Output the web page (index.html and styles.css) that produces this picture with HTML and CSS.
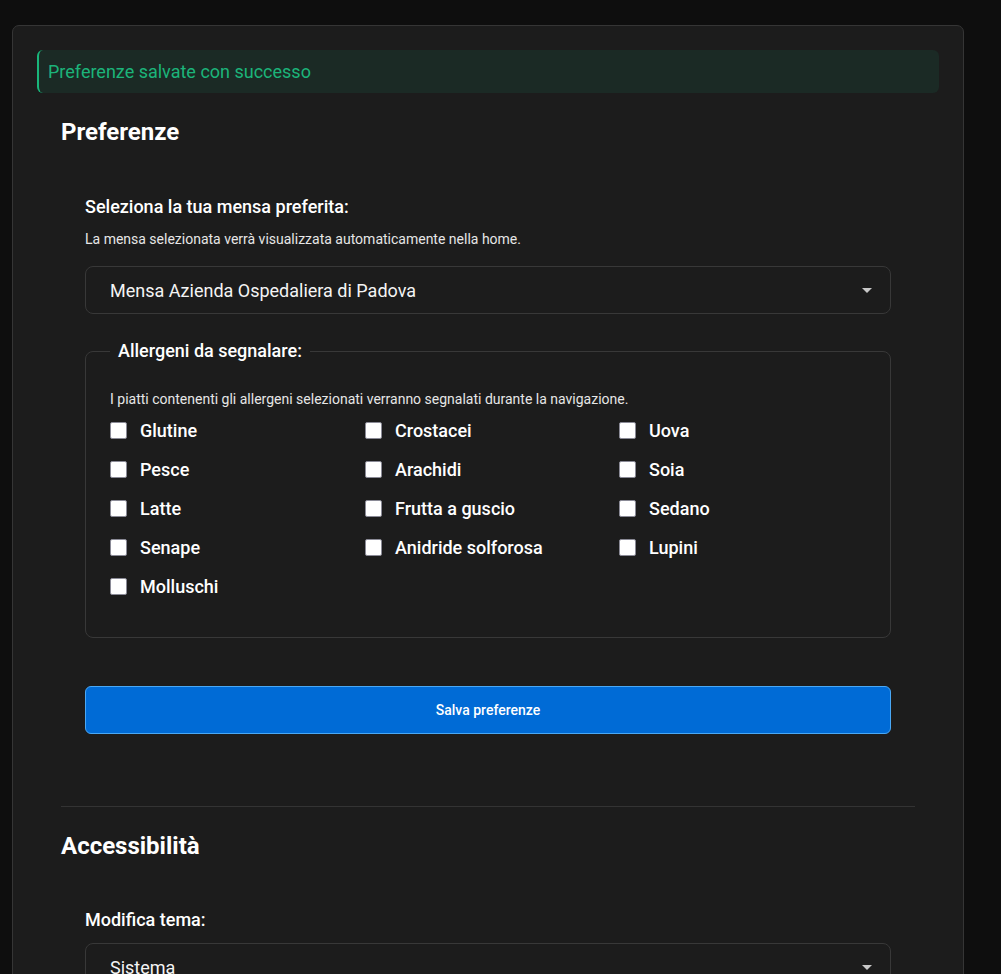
FILE: index.html
```html
<!DOCTYPE html>
<html lang="it">
<head>
<meta charset="utf-8">
<title>Preferenze</title>
<link rel="stylesheet" href="styles.css">
</head>
<body>
<main class="card">
  <div class="alert">Preferenze salvate con successo</div>

  <section class="section">
    <h2 class="title">Preferenze</h2>
    <form class="group">
      <label class="label" for="mensa">Seleziona la tua mensa preferita:</label>
      <p class="desc">La mensa selezionata verrà visualizzata automaticamente nella home.</p>
      <div class="select-wrap">
        <select id="mensa" class="select">
          <option>Mensa Azienda Ospedaliera di Padova</option>
        </select>
        <svg class="arrow" width="10" height="5" viewBox="0 0 10 5"><path d="M0 0h10L5 5z" fill="#c8c8c8"/></svg>
      </div>

      <fieldset class="fieldset">
        <legend class="legend">Allergeni da segnalare:</legend>
        <p class="desc desc-fs">I piatti contenenti gli allergeni selezionati verranno segnalati durante la navigazione.</p>
        <div class="grid">
          <label class="check"><input type="checkbox" class="box"><span>Glutine</span></label>
          <label class="check"><input type="checkbox" class="box"><span>Crostacei</span></label>
          <label class="check"><input type="checkbox" class="box"><span>Uova</span></label>
          <label class="check"><input type="checkbox" class="box"><span>Pesce</span></label>
          <label class="check"><input type="checkbox" class="box"><span>Arachidi</span></label>
          <label class="check"><input type="checkbox" class="box"><span>Soia</span></label>
          <label class="check"><input type="checkbox" class="box"><span>Latte</span></label>
          <label class="check"><input type="checkbox" class="box"><span>Frutta a guscio</span></label>
          <label class="check"><input type="checkbox" class="box"><span>Sedano</span></label>
          <label class="check"><input type="checkbox" class="box"><span>Senape</span></label>
          <label class="check"><input type="checkbox" class="box"><span>Anidride solforosa</span></label>
          <label class="check"><input type="checkbox" class="box"><span>Lupini</span></label>
          <label class="check"><input type="checkbox" class="box"><span>Molluschi</span></label>
        </div>
      </fieldset>

      <button type="button" class="btn">Salva preferenze</button>
    </form>
  </section>

  <hr class="divider">

  <section class="section">
    <h2 class="title title-2">Accessibilità</h2>
    <div class="group">
      <label class="label label-2" for="tema">Modifica tema:</label>
      <div class="select-wrap select-wrap-2">
        <select id="tema" class="select">
          <option>Sistema</option>
        </select>
        <svg class="arrow" width="10" height="5" viewBox="0 0 10 5"><path d="M0 0h10L5 5z" fill="#c8c8c8"/></svg>
      </div>
    </div>
  </section>
</main>
</body>
</html>
```

FILE: styles.css
```css
* { box-sizing: border-box; }
html, body { margin: 0; padding: 0; }
body {
  background: #0e0e0e;
  font-family: Roboto, "Liberation Sans", sans-serif;
  color: #f4f4f4;
  height: 974px;
  overflow: hidden;
}
.card {
  margin: 25px 0 0 12px;
  width: 952px;
  min-height: 1100px;
  background: #1c1c1c;
  border: 1px solid #353535;
  border-radius: 7px;
  padding: 24px;
}
.alert {
  height: 43px;
  display: flex;
  align-items: center;
  padding-left: 9px;
  background: #1b2a25;
  border-left: 2px solid #19b57a;
  border-radius: 6px;
  color: #1cb47a;
  font-size: 18px;
}
.section { padding: 0 24px; }
.title {
  margin: 25px 0 0;
  font-size: 24px;
  line-height: 29px;
  font-weight: 700;
  color: #fff;
}
.title-2 { margin-top: 25px; }
.group { padding: 0 24px; }
.label {
  display: block;
  margin-top: 49px;
  font-size: 18px;
  line-height: 22px;
  font-weight: 500;
  color: #fff;
}
.label-2 { margin-top: 48px; }
.desc {
  margin: 13px 0 0;
  font-size: 14px;
  line-height: 16px;
  color: #e6e6e6;
}
.select-wrap {
  position: relative;
  margin-top: 19px;
}
.select-wrap-2 { margin-top: 12px; }
.select {
  display: block;
  width: 100%;
  height: 48px;
  appearance: none;
  -webkit-appearance: none;
  background: #1c1c1c;
  border: 1px solid #383838;
  border-radius: 8px;
  padding: 0 24px;
  font-family: Roboto, "Liberation Sans", sans-serif;
  font-size: 18px;
  color: #f4f4f4;
}
.arrow {
  position: absolute;
  right: 19px;
  top: 22px;
}
.fieldset {
  margin: 26px 0 0;
  padding: 29px 24px 39px;
  border: 1px solid #383838;
  border-radius: 8px;
}
.legend {
  padding: 0 8px;
  font-size: 18px;
  line-height: 22px;
  font-weight: 500;
  color: #fff;
}
.desc-fs { margin-top: 0; }
.grid {
  margin-top: 11px;
  display: grid;
  grid-template-columns: 255px 254px 1fr;
  row-gap: 15px;
}
.check {
  display: flex;
  align-items: center;
  height: 24px;
  font-size: 18px;
  font-weight: 500;
  color: #fff;
}
.box {
  appearance: none;
  -webkit-appearance: none;
  margin: 0 13px 0 0;
  width: 17px;
  height: 17px;
  background: #fff;
  border: 1px solid #8a8a96;
  border-radius: 2px;
}
.btn {
  display: block;
  width: 100%;
  margin-top: 48px;
  height: 48px;
  background: #006bd6;
  border: 1px solid #4aa8f5;
  border-radius: 6px;
  color: #fff;
  font-family: Roboto, "Liberation Sans", sans-serif;
  font-size: 14px;
  font-weight: 500;
}
.divider {
  margin: 72px 24px 0;
  border: 0;
  border-top: 1px solid #333;
  height: 0;
}
```
